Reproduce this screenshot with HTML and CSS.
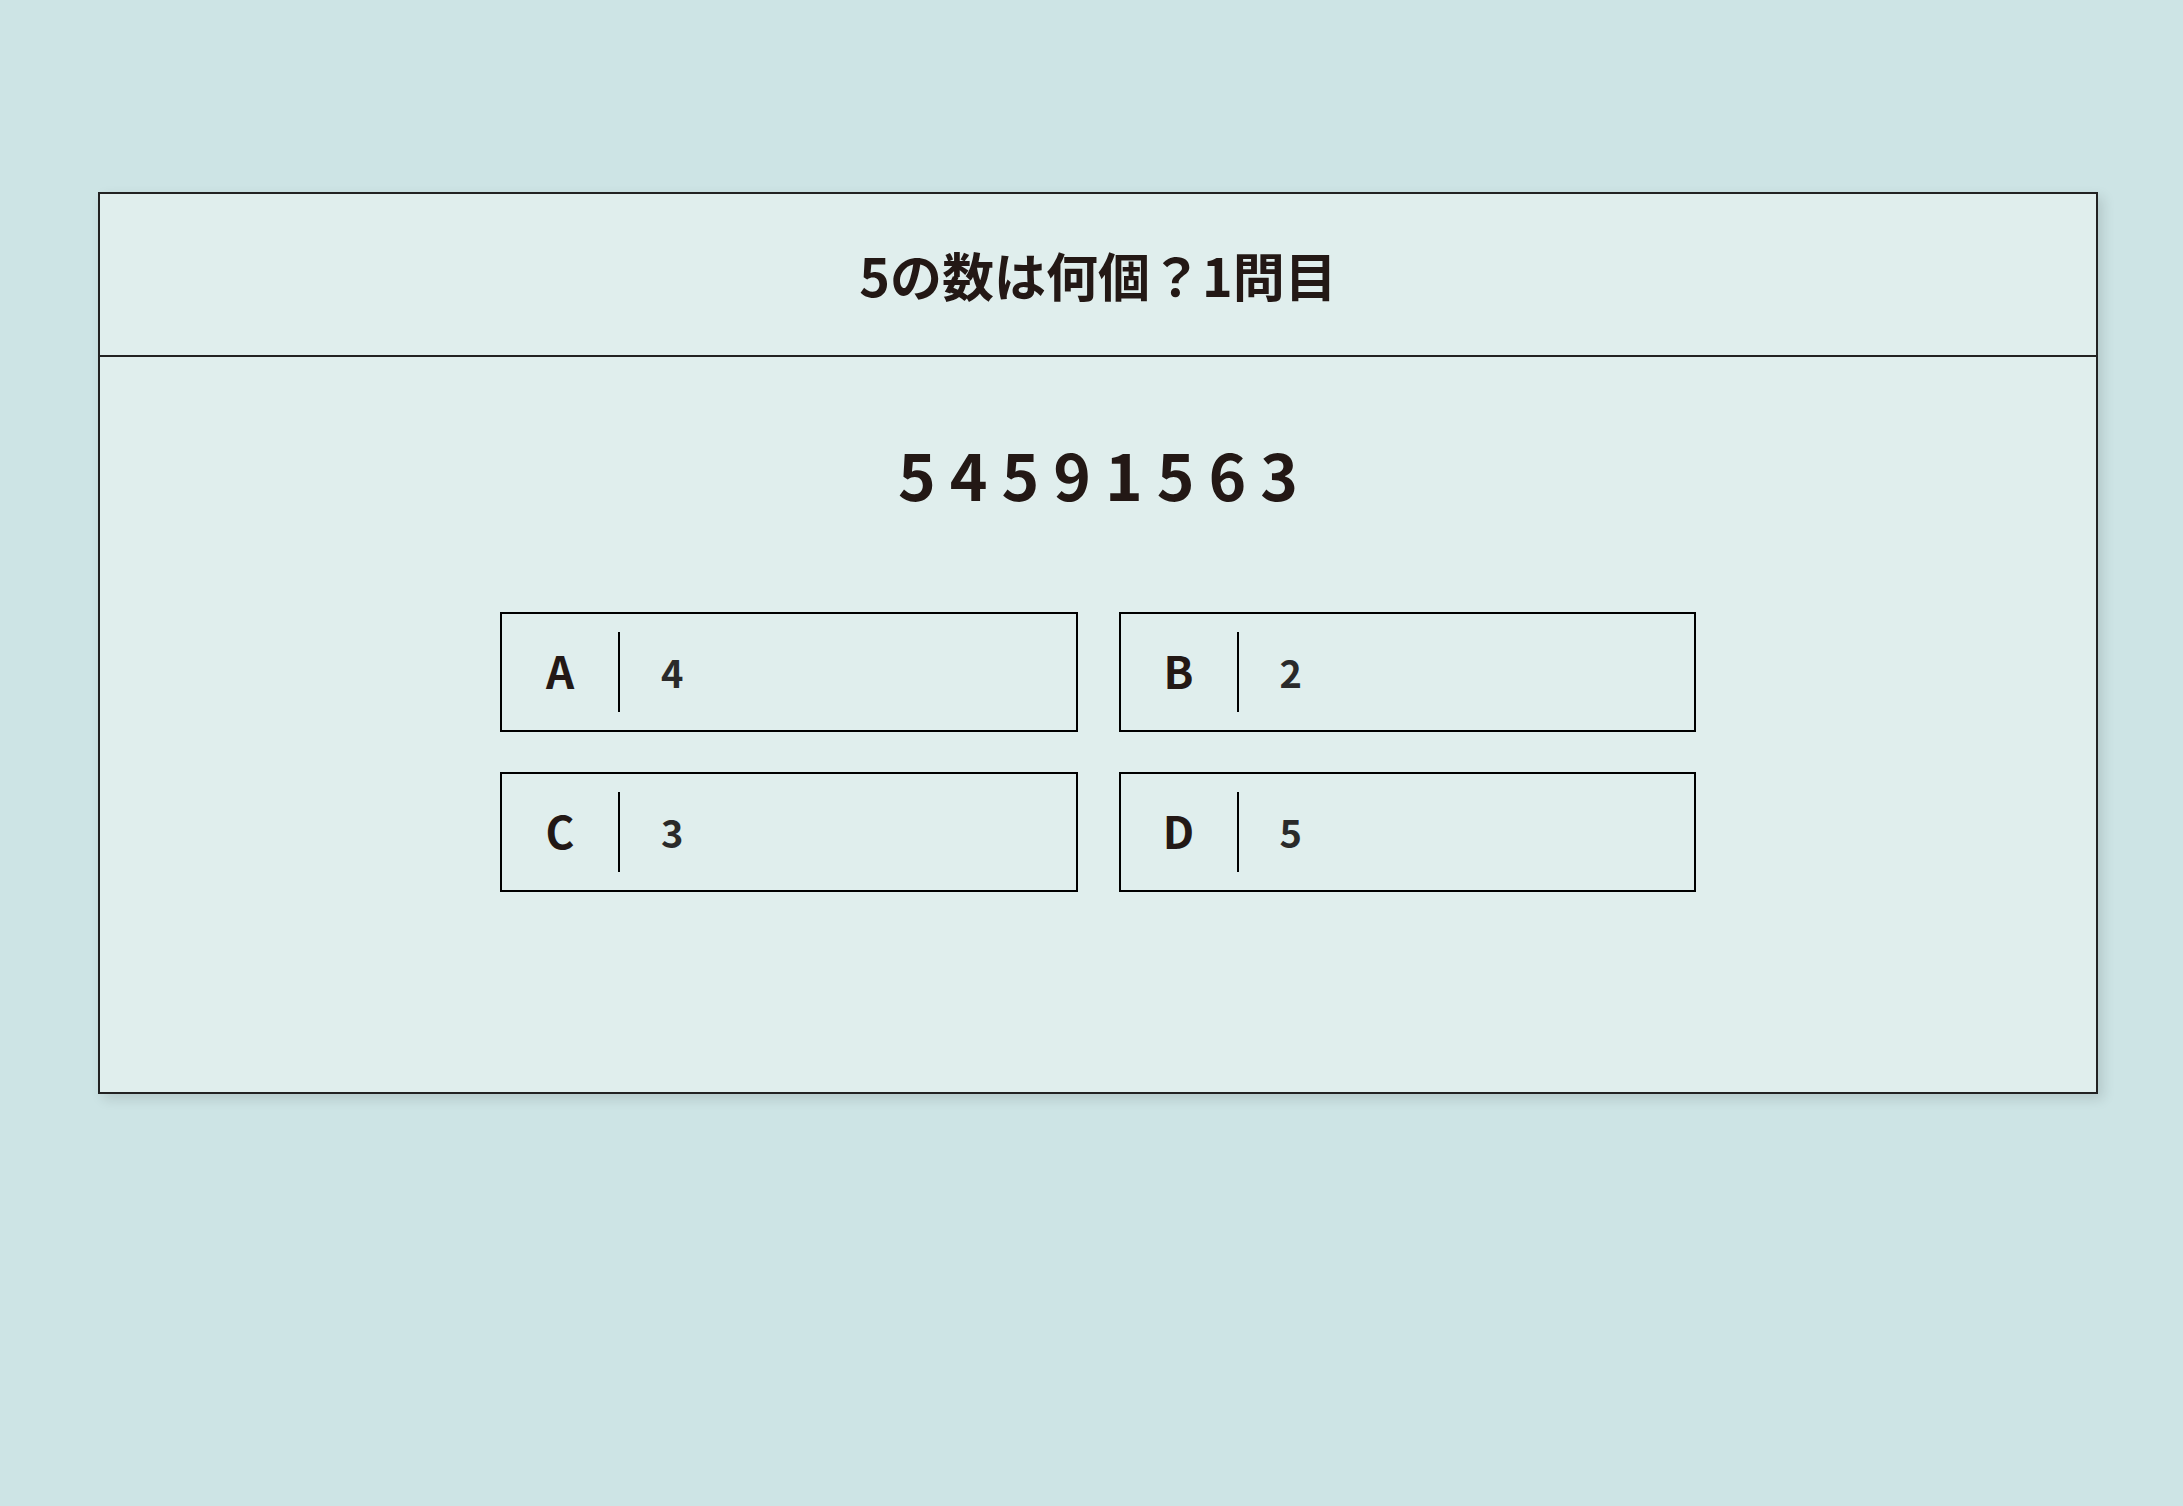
FILE: index.html
```html
<!DOCTYPE html>
<html lang="ja">
<head>
<meta charset="utf-8">
<title>5の数は何個？</title>
<link rel="stylesheet" href="styles.css">
</head>
<body>
<div class="page">
  <section class="card">
    <header class="card-header">
      <h1 class="title">5の数は何個？1問目</h1>
    </header>
    <div class="card-body">
      <div class="digits">
        <span>5</span><span>4</span><span>5</span><span>9</span><span>1</span><span>5</span><span>6</span><span>3</span>
      </div>
      <div class="options">
        <div class="option"><span class="opt-label">A</span><span class="opt-sep"></span><span class="opt-value">4</span></div>
        <div class="option"><span class="opt-label">B</span><span class="opt-sep"></span><span class="opt-value">2</span></div>
        <div class="option"><span class="opt-label">C</span><span class="opt-sep"></span><span class="opt-value">3</span></div>
        <div class="option"><span class="opt-label">D</span><span class="opt-sep"></span><span class="opt-value">5</span></div>
      </div>
    </div>
  </section>
</div>
</body>
</html>
```

FILE: styles.css
```css
html, body {
  margin: 0;
  padding: 0;
}
body {
  background: #cde4e5;
  font-family: "Noto Sans CJK JP", "Noto Sans", sans-serif;
  color: #231815;
  min-height: 1506px;
}
.page {
  padding: 192px 0 0 98px;
}
.card {
  box-sizing: border-box;
  width: 2000px;
  height: 902px;
  background: #e0eeed;
  border: 2px solid #222;
  box-shadow: 5px 5px 12px rgba(0, 0, 0, 0.12);
  display: flex;
  flex-direction: column;
}
.card-header {
  height: 161px;
  border-bottom: 2px solid #222;
  display: flex;
  align-items: center;
  justify-content: center;
}
.title {
  margin: 0;
  font-size: 52px;
  line-height: 1;
  font-weight: 700;
}
.card-body {
  padding-top: 84px;
}
.digits {
  display: flex;
  justify-content: center;
  gap: 14px;
  font-size: 64px;
  line-height: 1;
  font-weight: 700;
}
.options {
  width: 1196px;
  margin: 107px auto 0;
  display: grid;
  grid-template-columns: 1fr 1fr;
  gap: 40px 41px;
}
.option {
  box-sizing: border-box;
  height: 120px;
  border: 2px solid #000;
  display: flex;
  align-items: center;
}
.opt-label {
  width: 116px;
  text-align: center;
  font-size: 44px;
  line-height: 1;
  font-weight: 700;
  position: relative;
  top: -2px;
}
.opt-sep {
  width: 2px;
  height: 80px;
  background: #000;
}
.opt-value {
  padding-left: 41px;
  font-size: 38px;
  line-height: 1;
  font-weight: 700;
  color: #2a2a2a;
}
```
